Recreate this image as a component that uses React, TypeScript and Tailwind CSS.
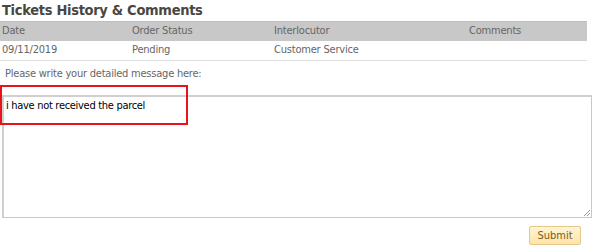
import React from "react";

export default function App() {
  const font = { fontFamily: '"DejaVu Sans Condensed", "DejaVu Sans", sans-serif' };
  return (
    <div className="w-[600px] h-[251px] bg-white relative overflow-hidden" style={font}>
      <div className="pl-[2px] pt-[1px] h-[21px] text-[14.5px] leading-[18px] font-bold text-[#4a4743] tracking-[-0.3px]">
        Tickets History &amp; Comments
      </div>
      <div className="w-[587px] text-[11px] text-[#666] tracking-[-0.2px]">
        <div className="grid grid-cols-[130px_142px_195px_1fr] h-[20px] items-center bg-[#c8c8c8] border-t border-[#bdbdbd] pl-[2px]">
          <div>Date</div>
          <div>Order Status</div>
          <div>Interlocutor</div>
          <div>Comments</div>
        </div>
        <div className="grid grid-cols-[130px_142px_195px_1fr] h-[19px] items-center pl-[2px]">
          <div>09/11/2019</div>
          <div>Pending</div>
          <div>Customer Service</div>
          <div></div>
        </div>
        <div className="h-0 border-t border-[#dddddd]" />
      </div>
      <div className="pl-[5px] pt-[6px] text-[11px] text-[#666] leading-[14px] tracking-[-0.22px]">
        Please write your detailed message here:
      </div>
      <div className="relative ml-[2px] mt-[14px] w-[590px] h-[123px]">
        <div className="w-full h-full border border-[#c8c8c8] border-l-2 border-t-2 border-l-[#d0d0d0] border-t-[#d0d0d0] text-[11px] text-black pl-[2px] pt-[2px] leading-[14px] tracking-[-0.3px]">
          i have not received the parcel
        </div>
        <svg className="absolute right-[1px] bottom-[1px]" width="9" height="9" viewBox="0 0 9 9">
          <line x1="8" y1="2" x2="2" y2="8" stroke="#999" strokeWidth="1" />
          <line x1="8" y1="5" x2="5" y2="8" stroke="#999" strokeWidth="1" />
        </svg>
        <div className="absolute left-[-2px] top-[-10px] w-[188px] h-[40px] border-2 border-[#e8141c]" />
      </div>
      <div className="flex justify-end pr-[19px] mt-[8px]">
        <button className="w-[52px] h-[19px] bg-gradient-to-b from-[#fff4d2] to-[#fde4a6] border border-[#e6c68a] rounded-[2px] text-[11px] text-[#7a5a2a] leading-none">
          Submit
        </button>
      </div>
    </div>
  );
}
